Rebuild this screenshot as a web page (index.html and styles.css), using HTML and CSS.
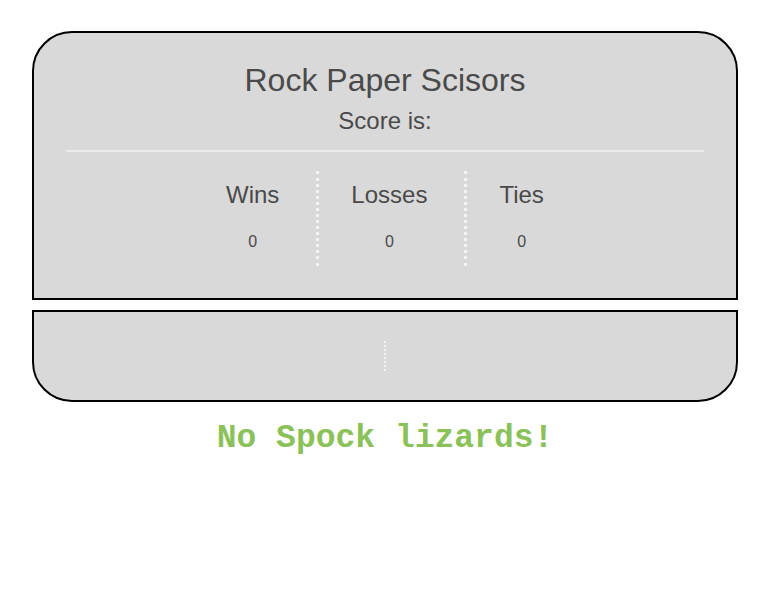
FILE: index.html
```html
<!DOCTYPE html>
<html>
<head>
<meta charset="utf-8">
<link rel="stylesheet" href="styles.css">
</head>
<body>
<div class="app">
  <section class="score-card">
    <h1 class="title">Rock Paper Scisors</h1>
    <p class="subtitle">Score is:</p>
    <hr class="rule">
    <div class="stats">
      <div class="stat">
        <div class="stat-label">Wins</div>
        <div class="stat-value">0</div>
      </div>
      <div class="stat">
        <div class="stat-label">Losses</div>
        <div class="stat-value">0</div>
      </div>
      <div class="stat">
        <div class="stat-label">Ties</div>
        <div class="stat-value">0</div>
      </div>
    </div>
  </section>
  <section class="play-card">
    <div class="play-divider"></div>
  </section>
  <p class="tagline">No Spock lizards!</p>
</div>
</body>
</html>
```

FILE: styles.css
```css
html, body {
  margin: 0;
  padding: 0;
  background: #ffffff;
}

body {
  font-family: "Liberation Sans", Arial, sans-serif;
  color: #4a4a4a;
}

.app {
  width: 706px;
  margin: 31px 0 0 32px;
}

.score-card {
  box-sizing: border-box;
  height: 269px;
  background: #d9d9d9;
  border: 2px solid #000;
  border-radius: 40px 40px 0 0;
  padding: 29px 32px 0;
  text-align: center;
}

.title {
  margin: 0;
  font-size: 32px;
  font-weight: normal;
  line-height: 36px;
}

.subtitle {
  margin: 9px 0 0;
  font-size: 24px;
  line-height: 28px;
}

.rule {
  margin: 15px 0 0;
  border: 0;
  height: 2px;
  background: #ececec;
}

.stats {
  display: flex;
  margin-top: 19px;
  padding-left: 128px;
}

.stat {
  box-sizing: border-box;
  padding: 10px 37px 0 32px;
  height: 95px;
}

.stat + .stat {
  border-left: 3px dotted #f4f4f4;
}

.stat-label {
  font-size: 24px;
  line-height: 28px;
}

.stat-value {
  margin-top: 24px;
  font-size: 16px;
  line-height: 18px;
}

.play-card {
  box-sizing: border-box;
  height: 92px;
  margin-top: 10px;
  background: #d9d9d9;
  border: 2px solid #000;
  border-radius: 0 0 40px 40px;
  display: flex;
  justify-content: center;
  padding-top: 29px;
}

.play-divider {
  width: 0;
  height: 30px;
  border-left: 2px dotted #f4f4f4;
}

.tagline {
  margin: 18px 0 0;
  text-align: center;
  font-family: "Liberation Mono", "Courier New", monospace;
  font-weight: bold;
  font-size: 33px;
  line-height: 38px;
  color: #8bc159;
}
```
